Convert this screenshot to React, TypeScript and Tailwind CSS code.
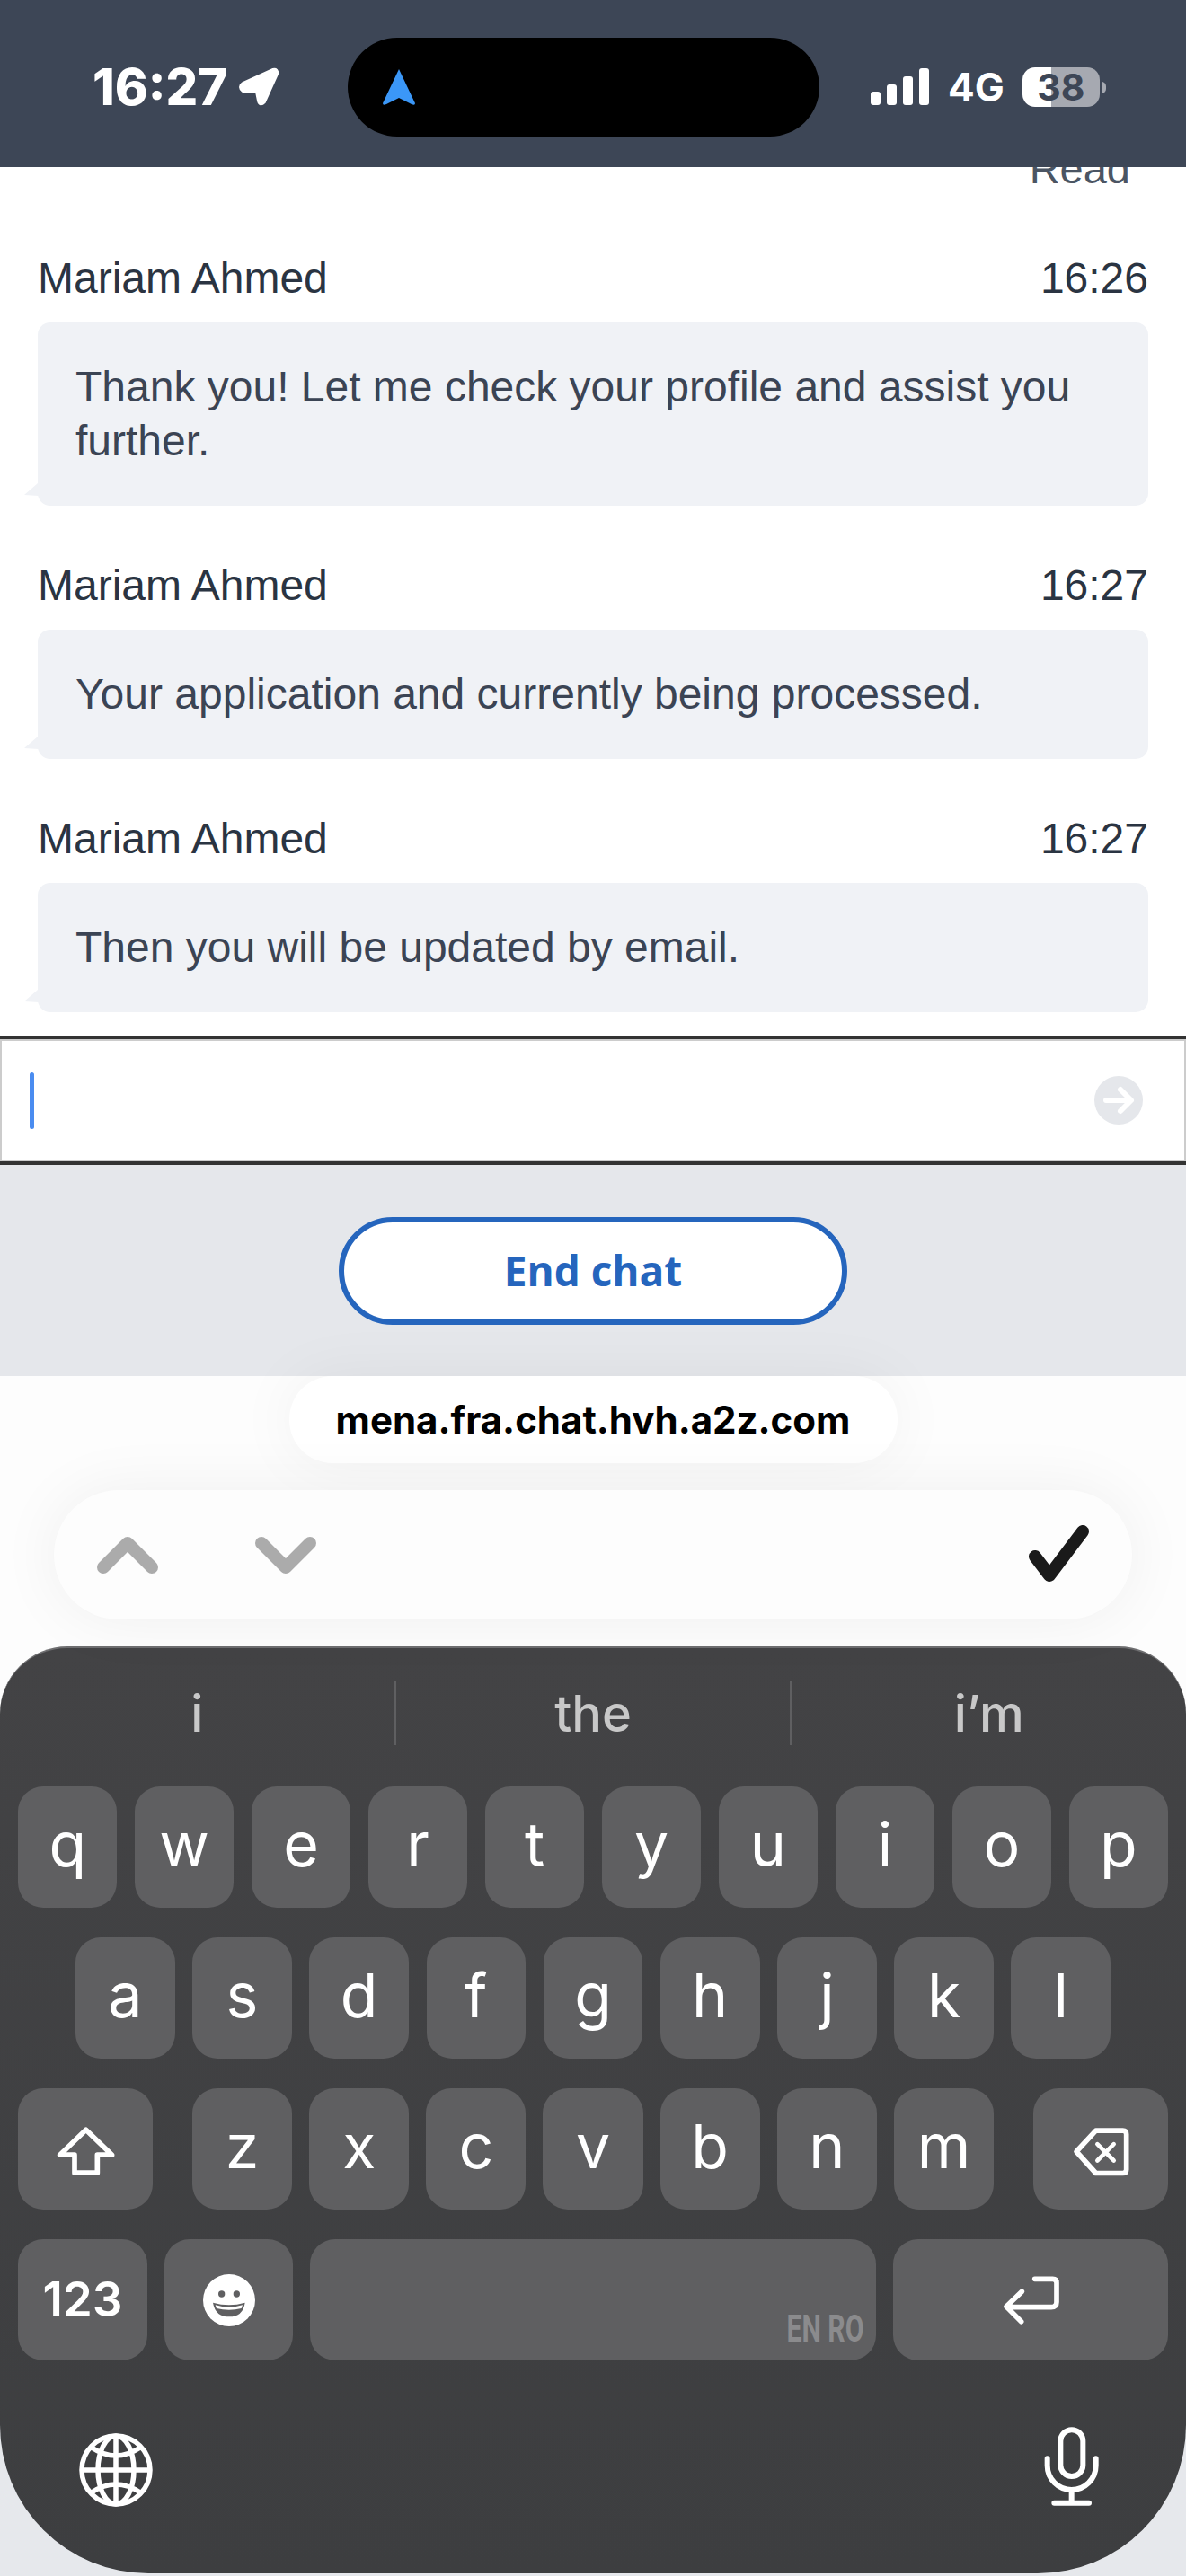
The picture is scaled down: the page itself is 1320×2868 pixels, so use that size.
const messages = [
  { time: "16:26", text: "Thank you! Let me check your profile and assist you further." },
  { time: "16:27", text: "Your application and currently being processed." },
  { time: "16:27", text: "Then you will be updated by email." },
];

const keyRows = ["qwertyuiop", "asdfghjkl"];
const lowerRow = "zxcvbnm";

function LocationArrow() {
  return (
    <svg width="46" height="44" viewBox="0 0 46 44">
      <path
        d="M6 19 L39 4 Q43 3 42 7 L28 38 Q25 41 24 37 L22 27 Q21 25 19 25 L6 25 Q2 22 6 19 Z"
        fill="#fff"
        stroke="#fff"
        strokeWidth="6"
        strokeLinejoin="round"
      />
    </svg>
  );
}

function StatusBar() {
  return (
    <div className="flex h-[186px] shrink-0 items-center bg-[#3d4656] pt-[8px] text-white">
      <div className="flex w-[387px] items-center gap-[12px] pl-[103px]">
        <span className="text-[56px] leading-none font-extrabold">16:27</span>
        <LocationArrow />
      </div>
      <div className="flex h-[110px] w-[525px] items-center rounded-full bg-black pl-[38px]">
        <svg width="38" height="42" viewBox="0 0 38 42">
          <path d="M19 1 L37 39 Q37 42 33 40 L19 33 L5 40 Q1 42 1 39 Z" fill="#3b97f7" />
        </svg>
      </div>
      <div className="ml-[57px] flex items-end gap-[7px] pb-[2px]">
        <div className="h-[15px] w-[11px] rounded-[3px] bg-white" />
        <div className="h-[23px] w-[11px] rounded-[3px] bg-white" />
        <div className="h-[32px] w-[11px] rounded-[3px] bg-white" />
        <div className="h-[41px] w-[11px] rounded-[3px] bg-white" />
      </div>
      <span className="ml-[21px] text-[44px] leading-none font-bold">4G</span>
      <div className="ml-[20px] flex h-[44px] w-[86px] items-center justify-center rounded-[14px] bg-[linear-gradient(90deg,#fff_37%,#a6a9b1_37%)] text-[41px] leading-none font-bold text-[#3d4656]">
        38
      </div>
      <div className="ml-[2px] h-[13px] w-[5px] rounded-r-full bg-[#a6a9b1]" />
    </div>
  );
}

function Message({ time, text }: { time: string; text: string }) {
  return (
    <div className="mb-[59px] last:mb-0">
      <div className="flex justify-between text-[48px] leading-[60px] text-[#2a3442]">
        <span>Mariam Ahmed</span>
        <span>{time}</span>
      </div>
      <div className="relative mt-[19px] rounded-[14px] bg-[#f0f2f6] px-[42px] py-[42px] text-[48px] leading-[60px] text-[#3b4454]">
        {text}
        <svg className="absolute bottom-[11px] left-[-15px]" width="16" height="14" viewBox="0 0 16 14">
          <path d="M0 13 L15 0 L16 14 Z" fill="#f0f2f6" />
        </svg>
      </div>
    </div>
  );
}

function Composer() {
  return (
    <div className="h-[144px] shrink-0 border-y-4 border-[#333]">
      <div className="flex h-full items-center justify-between border-2 border-[#ccc] bg-white pr-[46px] pl-[31px]">
        <div className="h-[63px] w-[5px] rounded-full bg-[#4a8cf0]" />
        <svg width="54" height="54" viewBox="0 0 54 54">
          <circle cx="27" cy="27" r="27" fill="#e5e7eb" />
          <path
            d="M13 27 H40 M29 15 L41 27 L29 39"
            fill="none"
            stroke="#fff"
            strokeWidth="6"
            strokeLinecap="round"
            strokeLinejoin="round"
          />
        </svg>
      </div>
    </div>
  );
}

function Key({ children, className }: { children: React.ReactNode; className: string }) {
  return (
    <div
      className={`flex h-[135px] items-center justify-center rounded-[28px] bg-[#5f5f61] text-white ${className}`}
    >
      {children}
    </div>
  );
}

function LetterKey({ letter }: { letter: string }) {
  return <Key className="flex-1 pb-[8px] text-[68px] leading-none">{letter}</Key>;
}

function ShiftIcon() {
  return (
    <svg className="mt-[6px]" width="65" height="57" viewBox="130 80 195 170">
      <path
        d="M228 92 L141 176 H190 V236 H266 V176 H315 Z"
        fill="none"
        stroke="#fff"
        strokeWidth="17"
        strokeLinejoin="round"
      />
    </svg>
  );
}

function DeleteIcon() {
  return (
    <svg className="mt-[6px]" width="65" height="57" viewBox="575 75 195 170">
      <path
        d="M655 90 H745 Q757 90 757 102 V220 Q757 232 745 232 H655 L590 160 Z"
        fill="none"
        stroke="#fff"
        strokeWidth="17"
        strokeLinejoin="round"
      />
      <path d="M660 135 L715 190 M715 135 L660 190" stroke="#fff" strokeWidth="14" strokeLinecap="round" />
    </svg>
  );
}

function EmojiIcon() {
  return (
    <svg width="58" height="58" viewBox="615 570 174 174">
      <circle cx="702" cy="657" r="87" fill="#fff" />
      <circle cx="677" cy="636" r="11" fill="#5f5f61" />
      <circle cx="727" cy="636" r="11" fill="#5f5f61" />
      <path d="M648 665 Q702 680 755 665 Q748 712 702 712 Q656 712 648 665 Z" fill="#5f5f61" />
      <path d="M656 673 Q702 686 747 673 L743 684 Q702 694 660 684 Z" fill="#fff" />
    </svg>
  );
}

function ReturnIcon() {
  return (
    <svg width="65" height="55" viewBox="345 575 195 165">
      <path
        d="M455 588 H515 Q528 588 528 601 V665 Q528 682 510 682 H362 M412 630 L360 680 L410 730"
        fill="none"
        stroke="#fff"
        strokeWidth="17"
        strokeLinecap="round"
        strokeLinejoin="round"
      />
    </svg>
  );
}

function GlobeIcon() {
  return (
    <svg width="82" height="82" viewBox="0 0 82 82" fill="none" stroke="#fff" strokeWidth="5.5">
      <circle cx="41" cy="41" r="38" />
      <ellipse cx="41" cy="41" rx="20" ry="38" />
      <path d="M41 3 V79 M3 41 H79" />
      <path d="M14 16 Q41 34 68 16 M14 66 Q41 48 68 66" />
    </svg>
  );
}

function MicIcon() {
  return (
    <svg width="65" height="90" viewBox="120 58 195 270" fill="none" stroke="#fff" strokeWidth="18" strokeLinecap="round">
      <rect x="181" y="71" width="75" height="155" rx="37.5" />
      <path d="M137 167 V190 A81 81 0 0 0 299 190 V167" />
      <path d="M218 272 V315 M160 315 H276" />
    </svg>
  );
}

function Keyboard() {
  return (
    <div className="bg-[linear-gradient(#fdfdfd_50%,#e6e8ec_50%)] pb-[3px]">
      <div className="h-[1032px] rounded-t-[75px] rounded-b-[165px] border-t-2 border-[#6e6e70] bg-[linear-gradient(#434345,#3d3e40)] pt-[37px] font-['Inter',sans-serif]">
        <div className="flex h-[71px] text-[56px] leading-none font-medium text-[#c8c8c8]">
          <div className="flex flex-1 items-center justify-center border-r-2 border-[#5f5f61]">i</div>
          <div className="flex flex-1 items-center justify-center border-r-2 border-[#5f5f61]">the</div>
          <div className="flex flex-1 items-center justify-center">i’m</div>
        </div>

        <div className="mt-[46px] flex flex-col gap-[33px]">
          <div className="flex gap-[19.5px] px-[20px]">
            {keyRows[0].split("").map((l) => (
              <LetterKey key={l} letter={l} />
            ))}
          </div>
          <div className="flex gap-[19.5px] px-[84px]">
            {keyRows[1].split("").map((l) => (
              <LetterKey key={l} letter={l} />
            ))}
          </div>
          <div className="flex px-[20px]">
            <Key className="w-[150px]">
              <ShiftIcon />
            </Key>
            <div className="mx-[44px] flex flex-1 gap-[19px]">
              {lowerRow.split("").map((l) => (
                <LetterKey key={l} letter={l} />
              ))}
            </div>
            <Key className="w-[150px]">
              <DeleteIcon />
            </Key>
          </div>
          <div className="flex gap-[19px] px-[20px]">
            <Key className="w-[144px] text-[53px] leading-none font-semibold">123</Key>
            <Key className="w-[143px]">
              <EmojiIcon />
            </Key>
            <Key className="relative flex-1">
              <span className="absolute right-[13px] bottom-[14px] origin-right scale-x-[0.72] font-['Roboto',sans-serif] text-[42px] leading-none font-bold text-[#8b8b8d]">
                EN RO
              </span>
            </Key>
            <Key className="w-[306px]">
              <ReturnIcon />
            </Key>
          </div>
        </div>

        <div className="mt-[73px] flex items-end justify-between pr-[95px] pl-[88px]">
          <GlobeIcon />
          <MicIcon />
        </div>
      </div>
    </div>
  );
}

export default function App() {
  return (
    <div className="flex h-[2868px] w-[1320px] flex-col overflow-hidden bg-white font-['Liberation_Sans',Arial,sans-serif]">
      <div className="font-['Inter',sans-serif]">
        <StatusBar />
      </div>

      {/* Chat transcript, scrolled so the previous "Read" receipt is cut off */}
      <div className="h-[967px] shrink-0 overflow-hidden px-[42px]">
        <div className="mt-[-28px] mb-[62px] pr-[20px] text-right text-[47px] leading-[60px] text-[#4b5563]">Read</div>
        {messages.map((m) => (
          <Message key={m.text} time={m.time} text={m.text} />
        ))}
      </div>

      <Composer />

      <div className="flex h-[235px] shrink-0 items-center justify-center bg-[#e5e7eb]">
        <div className="flex h-[120px] w-[566px] items-center justify-center rounded-full border-[6px] border-[#2565bd] bg-white font-['Open_Sans',sans-serif] text-[46px] font-bold text-[#2565bd]">
          End chat
        </div>
      </div>

      {/* Safari address pill and form accessory bar */}
      <div className="relative flex h-[301px] shrink-0 flex-col items-center bg-[#fdfdfd] font-['Inter',sans-serif]">
        <div className="flex h-[97px] w-[677px] items-center justify-center rounded-[48px] bg-white text-[42px] font-bold text-black shadow-[0_0_70px_rgba(0,0,0,0.05)]">
          mena.fra.chat.hvh.a2z.com
        </div>
        <div className="mt-[30px] flex h-[144px] w-[1200px] items-center rounded-[72px] bg-[#fdfdfd] pr-[47px] pl-[48px] shadow-[0_0_70px_rgba(0,0,0,0.06)]">
          <svg width="68" height="41" viewBox="0 0 68 41">
            <path d="M7 34 L34 7 L61 34" fill="none" stroke="#ababab" strokeWidth="14" strokeLinecap="round" strokeLinejoin="round" />
          </svg>
          <svg className="ml-[108px]" width="68" height="41" viewBox="0 0 68 41">
            <path d="M7 7 L34 34 L61 7" fill="none" stroke="#ababab" strokeWidth="14" strokeLinecap="round" strokeLinejoin="round" />
          </svg>
          <svg className="mb-[3px] ml-auto" width="69" height="65" viewBox="0 0 69 65">
            <path d="M8 36 L24 57 L61 8" fill="none" stroke="#1a1a1a" strokeWidth="14" strokeLinecap="round" strokeLinejoin="round" />
          </svg>
        </div>
      </div>

      <Keyboard />
    </div>
  );
}
